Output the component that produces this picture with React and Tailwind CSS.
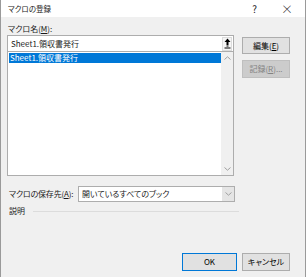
import React from 'react';

const jp = "font-['Yu_Gothic_UI','Meiryo_UI','Noto_Sans_CJK_JP',sans-serif] [font-feature-settings:'palt']";

const Chevron = ({ down }) => (
  <svg width="7" height="4" viewBox="0 0 7 4" className={down ? '' : 'rotate-180'}>
    <path d="M0.5 0.5 L3.5 3.2 L6.5 0.5" fill="none" stroke="#a0a0a0" strokeWidth="1" />
  </svg>
);

const PinIcon = () => (
  <svg width="7" height="11" viewBox="0 0 7 11">
    <path d="M3.5 0.5 L6.5 4 L4.5 4 L4.5 7 L2.5 7 L2.5 4 L0.5 4 Z" fill="#000" />
    <rect x="2.5" y="7.5" width="2" height="1" fill="#000" />
    <rect x="0.5" y="9.5" width="6" height="1" fill="#000" />
  </svg>
);

const Button = ({ children, disabled, primary }) => (
  <div
    className={`flex h-full items-center justify-center border text-[8px] ${
      disabled
        ? 'border-[#bfbfbf] bg-[#cccccc] text-[#838383]'
        : primary
        ? 'border-[#0078d7] bg-[#e1e1e1] text-black'
        : 'border-[#adadad] bg-[#e1e1e1] text-black'
    }`}
  >
    {children}
  </div>
);

export default function App() {
  return (
    <div className={`${jp} flex h-[277px] w-[306px] flex-col border-x border-[#9a9a9a] bg-[#f0f0f0] text-[8px] leading-[12px] text-[#1a1a1a]`}>
      {/* title bar */}
      <div className="flex h-[17px] shrink-0 items-center justify-between bg-white pl-[7px] pr-[12px]">
        <span className="text-[7.5px]">マクロの登録</span>
        <div className="flex items-center gap-[24px] text-[10px] text-[#222]">
          <span>?</span>
          <span className="text-[12px] font-light">×</span>
        </div>
      </div>

      <div className="flex flex-1 flex-col pl-[6px] pr-[15px]">
        <div className="mt-[6px] pl-[1px]">
          マクロ名(<span className="underline">M</span>):
        </div>

        <div className="flex gap-[8px]">
          {/* left column */}
          <div className="flex w-[227px] flex-col">
            <div className="flex h-[17px] items-center border border-[#adadad] bg-white pl-[3px]">
              <span className="flex-1">Sheet1.領収書発行</span>
              <div className="mr-[1px] flex h-[14px] w-[10px] items-center justify-center border border-[#dcdcdc] bg-[#f5f5f5]">
                <PinIcon />
              </div>
            </div>
            <div className="flex h-[124px] border border-t-0 border-[#adadad] bg-white">
              <div className="flex-1 pl-[1px] pt-[1px]">
                <div className="h-[10px] bg-[#0078d7] pl-[1px] leading-[10px] text-white">
                  Sheet1.領収書発行
                </div>
              </div>
              <div className="flex w-[12px] flex-col items-center justify-between bg-[#f0f0f0] py-[4px]">
                <Chevron />
                <Chevron down />
              </div>
            </div>
          </div>

          {/* right column */}
          <div className="mt-[2px] flex w-[48px] flex-col gap-[6px]">
            <div className="h-[17px]">
              <Button>編集(<span className="underline">E</span>)</Button>
            </div>
            <div className="h-[18px]">
              <Button disabled>記録(<span className="underline">R</span>)...</Button>
            </div>
          </div>
        </div>

        {/* store location */}
        <div className="mt-[10px] flex items-center">
          <span className="w-[71px] shrink-0 whitespace-nowrap pl-[2px] tracking-[-0.2px]">
            マクロの保存先(<span className="underline">A</span>):
          </span>
          <div className="flex h-[16px] w-[157px] items-center border border-[#adadad] bg-white">
            <span className="flex-1 pl-[3px]">開いているすべてのブック</span>
            <div className="flex h-full w-[12px] items-center justify-center bg-[#e5e5e5]">
              <Chevron down />
            </div>
          </div>
        </div>

        {/* description */}
        <div className="mt-[3px] flex items-center gap-[8px] pl-[2px]">
          <span>説明</span>
          <div className="h-px w-[206px] bg-[#dcdcdc]" />
        </div>

        <div className="flex-1" />

        {/* bottom buttons */}
        <div className="mb-[6px] flex justify-end gap-[5px]">
          <div className="h-[18px] w-[55px]">
            <Button primary>OK</Button>
          </div>
          <div className="h-[18px] w-[48px]">
            <Button>キャンセル</Button>
          </div>
        </div>
      </div>
    </div>
  );
}
